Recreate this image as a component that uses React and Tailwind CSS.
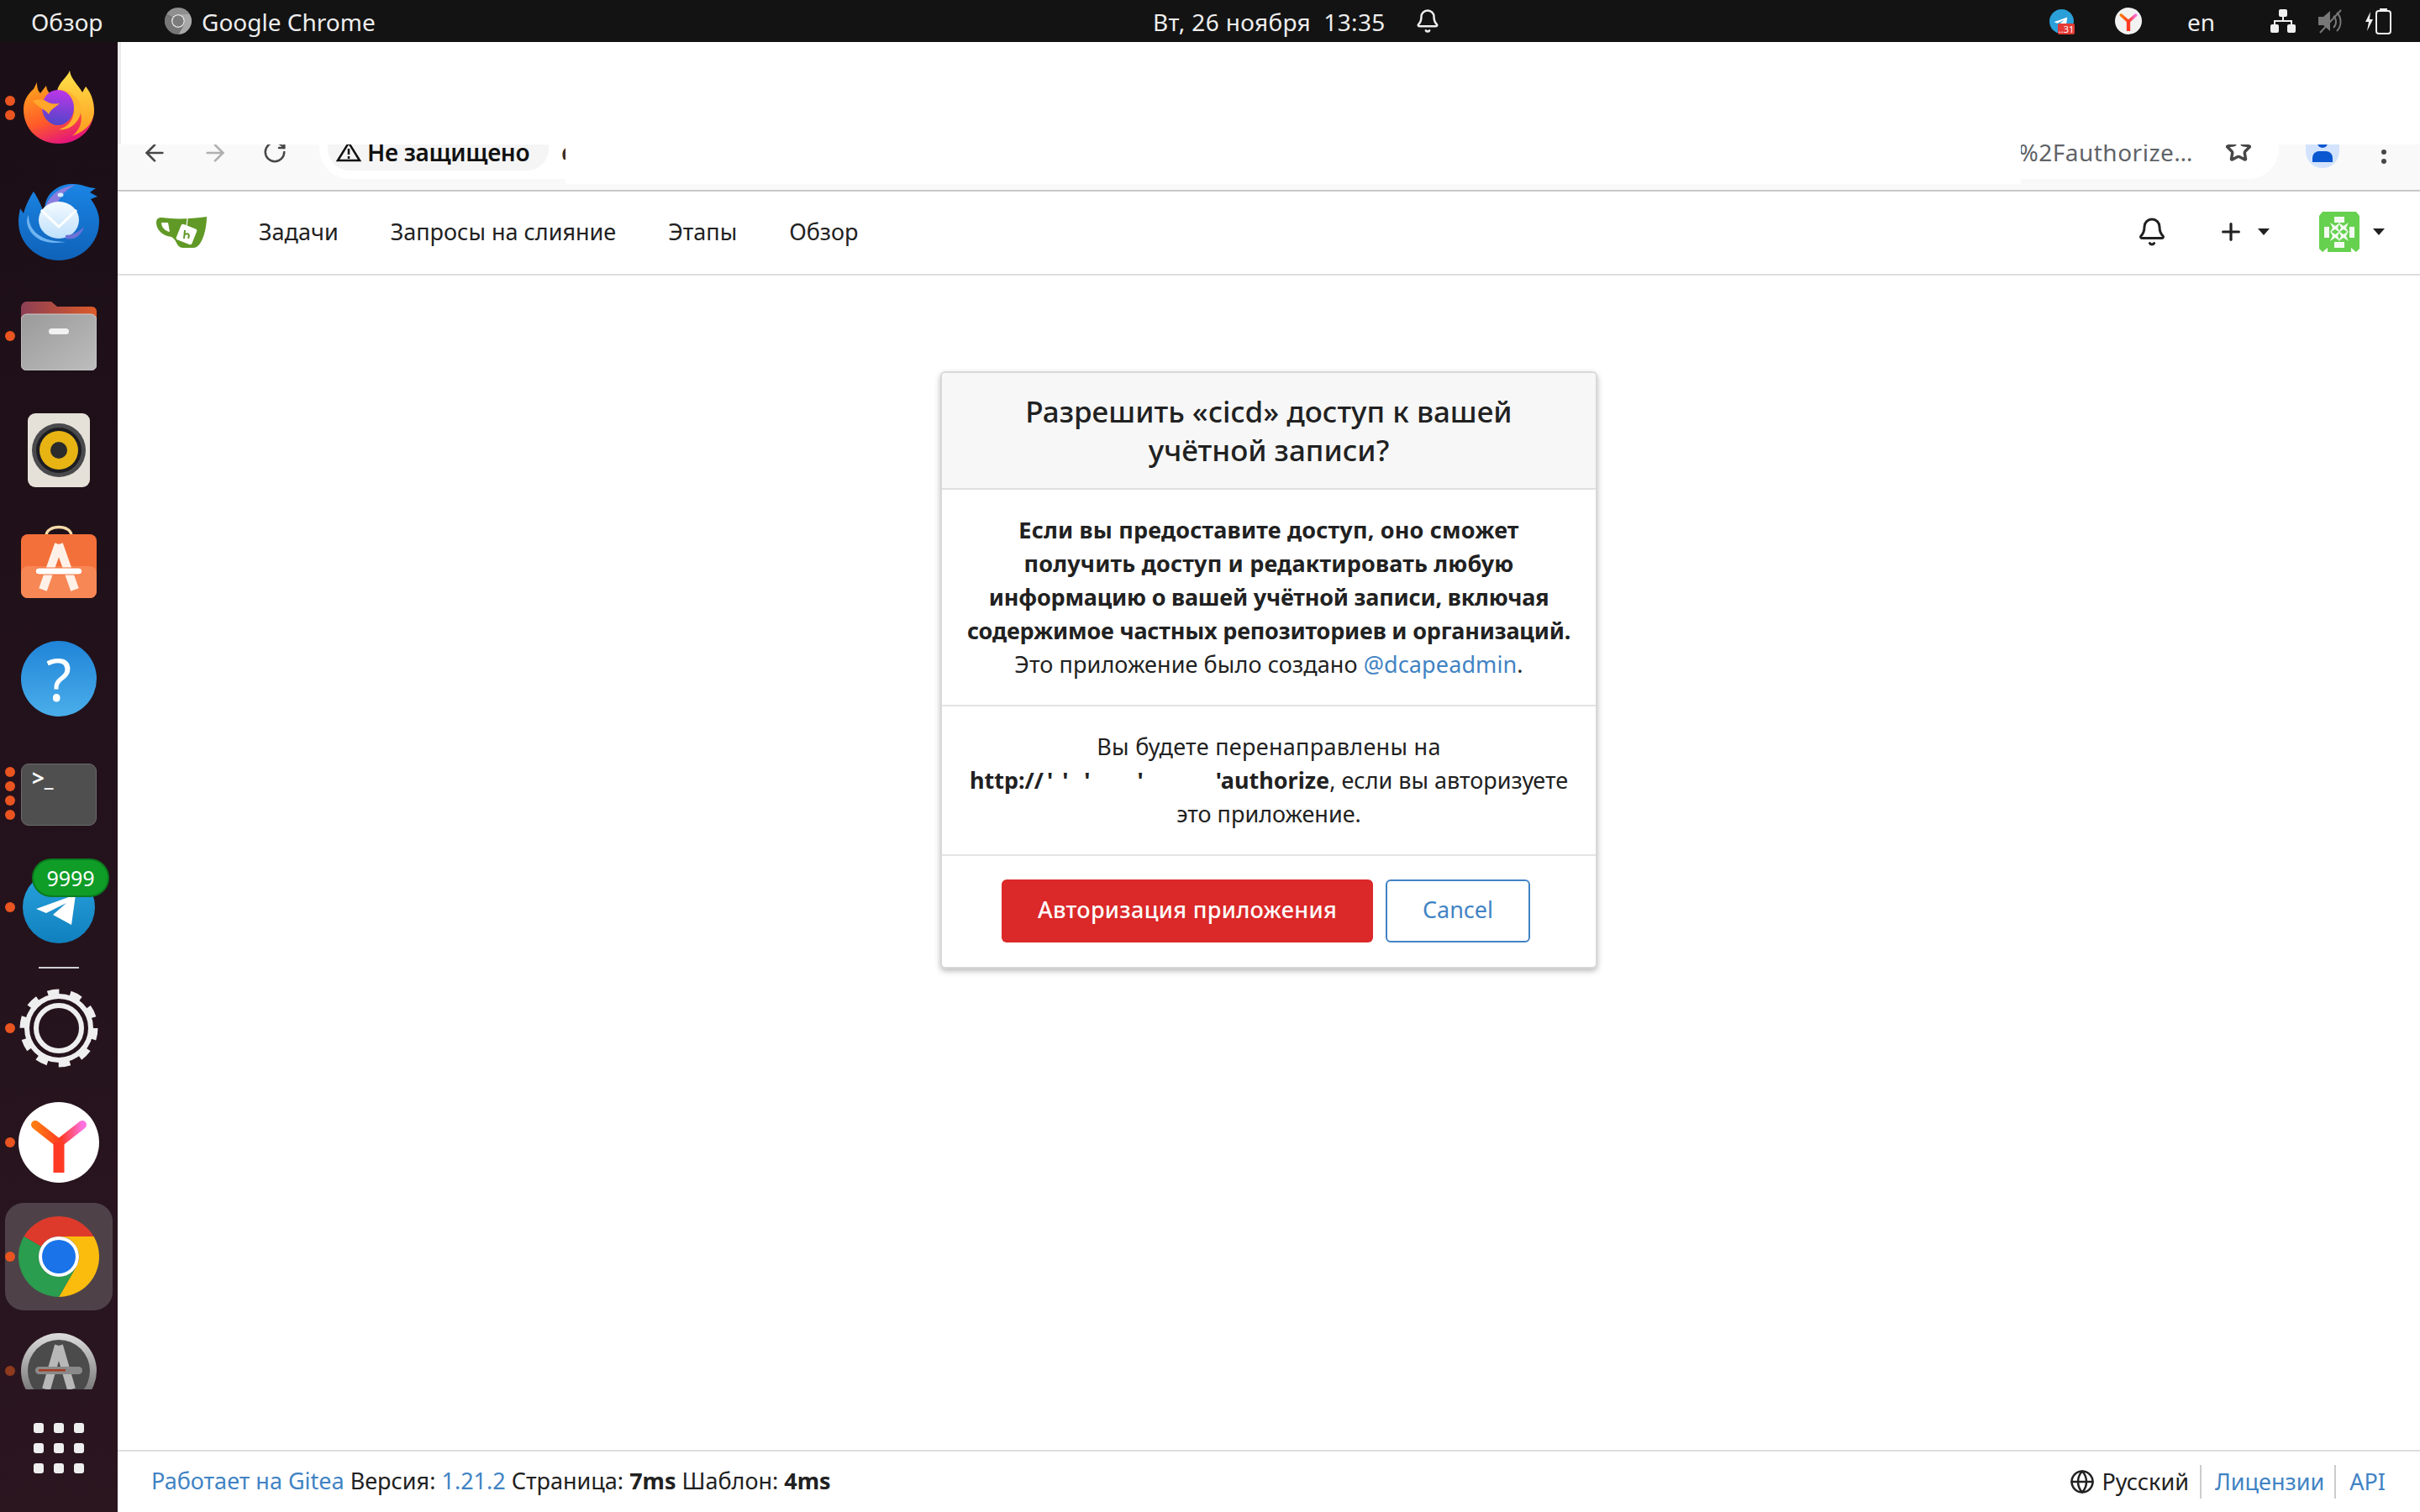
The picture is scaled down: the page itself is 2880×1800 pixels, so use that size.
import React from "react";
import { ArrowLeft, ArrowRight, Bell, Globe, Plus, RotateCw, Star } from "lucide-react";

const font = { fontFamily: '"Noto Sans", "Open Sans", sans-serif' };

const Firefox = () => (
  <svg width="84" height="88" viewBox="0 0 84 88">
    <defs>
      <linearGradient id="ffBody" x1="0.2" y1="0.1" x2="0.6" y2="1">
        <stop offset="0" stopColor="#ff9a1e" />
        <stop offset="0.55" stopColor="#ff5a2a" />
        <stop offset="1" stopColor="#e3127f" />
      </linearGradient>
      <linearGradient id="ffFlame" x1="0.5" y1="0" x2="0.5" y2="1">
        <stop offset="0" stopColor="#ffe14a" />
        <stop offset="1" stopColor="#ff9a1e" />
      </linearGradient>
      <linearGradient id="ffGlobe" x1="0.5" y1="0" x2="0.4" y2="1">
        <stop offset="0" stopColor="#bd36e8" />
        <stop offset="1" stopColor="#4f46c8" />
      </linearGradient>
    </defs>
    <path d="M0 46 C0 36 5 28 12 22 L16 14 C16 20 17 24 20 27 L27 18 C28 24 30 28 36 28 L70 30 L84 46 C84 70 66 87 42 87 C18 87 0 70 0 46 Z" fill="url(#ffBody)" />
    <path d="M55 0 C56 10 66 18 70 26 L74 19 C80 26 84 36 84 47 C84 62 74 72 58 78 C70 68 72 54 64 42 C60 34 50 30 40 24 C42 14 52 8 55 0 Z" fill="url(#ffFlame)" />
    <path d="M42 22 C58 24 70 36 68 50 C66 62 54 72 42 70 C56 66 60 56 60 46 C60 36 52 28 42 22 Z" fill="#ffb32c" />
    <ellipse cx="41" cy="44" rx="19" ry="21" fill="url(#ffGlobe)" />
    <path d="M11 36 C18 33 24 34 28 37 C32 40 38 40 43 39 C38 44 32 46 30 52 C26 46 17 44 11 36 Z" fill="#ffa62b" />
  </svg>
);

const Thunderbird = () => (
  <svg width="96" height="92" viewBox="0 0 96 92">
    <defs>
      <linearGradient id="tbBody" x1="0.5" y1="0" x2="0.5" y2="1">
        <stop offset="0" stopColor="#1a84e4" />
        <stop offset="1" stopColor="#0f62b8" />
      </linearGradient>
      <linearGradient id="tbEnv" x1="0.5" y1="0" x2="0.5" y2="1">
        <stop offset="0" stopColor="#f4faff" />
        <stop offset="1" stopColor="#bfe0fb" />
      </linearGradient>
    </defs>
    <path d="M32 24 C36 8 52 0 66 1 C74 1 84 6 92 6 L85 11 L94 16 L86 19 C94 30 96 38 96 46 C96 72 74 92 48 92 C22 92 0 72 0 46 C0 38 2 32 2 30 L6 36 C8 30 10 22 18 10 C22 16 26 24 30 34 Z" fill="url(#tbBody)" />
    <path d="M32 28 C38 12 52 4 68 2 C60 6 50 12 46 26 C40 26 36 28 32 34 Z" fill="#8a7de0" />
    <ellipse cx="50" cy="14" rx="3.5" ry="2.5" fill="#d6ecff" />
    <path d="M12 38 C12 56 26 70 56 70 C44 72 28 72 18 62 C10 54 8 44 12 38 Z" fill="#6fb4f1" />
    <ellipse cx="48" cy="44" rx="24" ry="22" fill="url(#tbEnv)" />
    <path d="M27 32 L48 52 L69 32" fill="none" stroke="#ffffff" strokeWidth="3" />
    <path d="M56 62 C66 62 74 56 78 52 C74 64 66 68 56 66 Z" fill="#6a72d8" />
  </svg>
);

const Files = () => (
  <svg width="90" height="82" viewBox="0 0 90 82">
    <defs>
      <linearGradient id="flTab" x1="0" y1="0" x2="1" y2="0">
        <stop offset="0" stopColor="#8c3f55" />
        <stop offset="1" stopColor="#dd5a28" />
      </linearGradient>
      <linearGradient id="flBody" x1="0" y1="0" x2="1" y2="1">
        <stop offset="0" stopColor="#9a9a9a" />
        <stop offset="1" stopColor="#bdbdbd" />
      </linearGradient>
    </defs>
    <path d="M0 8 C0 3 3 0 7 0 L36 0 L43 6 L84 6 C88 6 90 9 90 12 L90 30 L0 30 Z" fill="url(#flTab)" />
    <rect x="0" y="15" width="90" height="67" rx="7" fill="url(#flBody)" stroke="#cfcfcf" strokeWidth="1" />
    <rect x="33" y="32" width="24" height="7" rx="3.5" fill="#f2f2f2" />
  </svg>
);

const Rhythmbox = () => (
  <svg width="74" height="88" viewBox="0 0 74 88">
    <rect width="74" height="88" rx="9" fill="#e5e1d8" />
    <ellipse cx="37" cy="44" rx="32" ry="32" fill="#4a4a4c" />
    <ellipse cx="37" cy="44" rx="27" ry="27" fill="#1d1d22" />
    <ellipse cx="37" cy="44" rx="23" ry="23" fill="#e7b414" />
    <ellipse cx="37" cy="44" rx="10" ry="10" fill="#2b2b2b" />
  </svg>
);

const Software = () => (
  <svg width="90" height="88" viewBox="0 0 90 88">
    <path d="M30 14 C30 0 60 0 60 14" fill="none" stroke="#f5d9a8" strokeWidth="3.5" />
    <rect x="0" y="12" width="90" height="76" rx="8" fill="#f4703a" />
    <rect x="0" y="50" width="90" height="38" rx="8" fill="#f78755" />
    <path d="M45 24 L26 78 M45 24 L64 78" stroke="#fff1e8" strokeWidth="10" />
    <rect x="17" y="52" width="56" height="8" rx="4" fill="#ffffff" stroke="#f4703a" strokeWidth="1" />
  </svg>
);

const Plane = () => (
  <path d="M16 45 L63 28 L58 64 L36 52 L52 38 L28 50 Z" fill="#ffffff" />
);

const Telegram = () => (
  <svg width="86" height="86" viewBox="0 0 86 86">
    <defs>
      <linearGradient id="tgBody" x1="0.5" y1="0" x2="0.5" y2="1">
        <stop offset="0" stopColor="#2aa3e0" />
        <stop offset="1" stopColor="#0f80bd" />
      </linearGradient>
    </defs>
    <circle cx="43" cy="43" r="43" fill="url(#tgBody)" />
    <Plane />
  </svg>
);

const Gear = () => (
  <svg width="96" height="96" viewBox="0 0 96 96" fill="none">
    <circle cx="48" cy="48" r="41" stroke="#eeeeee" strokeWidth="11" strokeDasharray="13 12.75" />
    <circle cx="48" cy="48" r="38" stroke="#eeeeee" strokeWidth="6" />
    <circle cx="48" cy="48" r="27" stroke="#eeeeee" strokeWidth="6" />
  </svg>
);

const Yandex = () => (
  <svg width="96" height="96" viewBox="0 0 96 96">
    <defs>
      <linearGradient id="yaMark" x1="0" y1="0" x2="1" y2="0">
        <stop offset="0" stopColor="#ff7a10" />
        <stop offset="0.55" stopColor="#ff3a24" />
        <stop offset="1" stopColor="#ff70e0" />
      </linearGradient>
    </defs>
    <circle cx="48" cy="48" r="48" fill="#ffffff" />
    <path d="M20 27 L48 49 L76 27" fill="none" stroke="url(#yaMark)" strokeWidth="10" strokeLinecap="round" strokeLinejoin="round" />
    <path d="M48 48 L48 84" fill="none" stroke="#ff3a24" strokeWidth="13" />
  </svg>
);

const Chrome = ({ size = 96, red = "#de3a2c", yellow = "#fbbc0e", green = "#2a9d4e", blue = "#1a73e8", ring = "#ffffff" }) => (
  <svg width={size} height={size} viewBox="0 0 48 48">
    <path d="M24 0 A24 24 0 0 1 44.8 12 L24 12 A12 12 0 0 0 13.6 18 L3.2 12 A24 24 0 0 1 24 0 Z" fill={red} />
    <path d="M44.8 12 A24 24 0 0 1 24 48 L34.4 30 A12 12 0 0 0 24 12 Z" fill={yellow} />
    <path d="M24 48 A24 24 0 0 1 3.2 12 L13.6 18 A12 12 0 0 0 34.4 30 Z" fill={green} />
    <circle cx="24" cy="24" r="12" fill={ring} />
    <circle cx="24" cy="24" r="10" fill={blue} />
  </svg>
);

const Updater = () => (
  <svg className="mb-[24px]" width="90" height="68" viewBox="0 0 90 68">
    <defs>
      <linearGradient id="upRing" x1="0.5" y1="0" x2="0.5" y2="1">
        <stop offset="0" stopColor="#dddddd" />
        <stop offset="1" stopColor="#5a5a5a" />
      </linearGradient>
    </defs>
    <circle cx="45" cy="46" r="45" fill="url(#upRing)" />
    <circle cx="45" cy="46" r="37" fill="#4b4b4b" />
    <path d="M45 16 L30 68 M45 16 L60 68" stroke="#b8b8b8" strokeWidth="10" />
    <rect x="17" y="41" width="56" height="9" rx="4.5" fill="#8a8a8a" />
    <rect x="21" y="44" width="32" height="2.5" fill="#a23c22" />
  </svg>
);

const GiteaLogo = () => (
  <svg width="60" height="38" viewBox="0 0 60 38">
    <path d="M17 3 C28 4 46 3 60 1 C60 12 57 26 52 33 C50 36 47 38 44 38 L33 38 C28 38 26 36 24 32 C22 28 20 26 18 25 C8 24 0 17 0 8 C0 4 2 2 6 2 C10 2 13 3 17 3 Z" fill="#609926" />
    <path d="M6 8 C6 13 10 18 16 19 L14 8 Z" fill="#ffffff" />
    <path d="M37 3 L36 14" stroke="#ffffff" strokeWidth="1.2" />
    <rect x="26" y="12" width="20" height="20" rx="2.5" fill="#ffffff" transform="rotate(22 36 22)" />
    <path d="M34 17 L33 27 M34 22 C38 20 40 22 38 27" fill="none" stroke="#609926" strokeWidth="2" />
  </svg>
);

const UserAvatar = () => (
  <svg width="48" height="48" viewBox="0 0 48 48">
    <path d="M4 0 L44 0 L48 5 L48 44 L44 48 L38 43 L10 43 L4 48 L0 44 L0 5 Z" fill="#66d14f" />
    <path d="M10 42 L38 42 L38 48 L10 48 Z" fill="#66d14f" />
    <g fill="#ffffff" opacity="0.92">
      <rect x="18" y="6" width="12" height="7" />
      <rect x="18" y="36" width="12" height="7" />
      <rect x="6" y="18" width="6" height="13" />
      <rect x="36" y="18" width="6" height="13" />
      <path d="M13 13 L19 17 L25 13 L22 19 L25 25 L19 21 L13 25 L16 19 Z" />
      <path d="M23 13 L29 17 L35 13 L32 19 L35 25 L29 21 L23 25 L26 19 Z" />
      <path d="M13 23 L19 27 L25 23 L22 29 L25 35 L19 31 L13 35 L16 29 Z" />
      <path d="M23 23 L29 27 L35 23 L32 29 L35 35 L29 31 L23 35 L26 29 Z" />
    </g>
  </svg>
);

const Caret = ({ className = "" }) => (
  <span className={`inline-block w-0 h-0 border-x-[7px] border-x-transparent border-t-[8px] border-t-[#212121] ${className}`} />
);

const dockItems = [
  { key: "firefox", icon: <Firefox />, dots: 2 },
  { key: "thunderbird", icon: <Thunderbird /> },
  { key: "files", icon: <Files />, dots: 1 },
  { key: "rhythmbox", icon: <Rhythmbox /> },
  { key: "software", icon: <div className="mt-[-8px]"><Software /></div> },
  {
    key: "help",
    icon: (
      <div className="w-[90px] h-[90px] rounded-full bg-gradient-to-b from-[#1f84d8] to-[#4aaeea] flex items-center justify-center text-white text-[70px] leading-none">?</div>
    ),
  },
  {
    key: "terminal",
    icon: (
      <div className="mt-[4px] w-[90px] h-[74px] rounded-[9px] bg-[#4f4f4f] border border-[#6a6a6a] pl-[12px] pt-[2px] text-white text-[26px] font-bold leading-[28px]">{">_"}</div>
    ),
    dots: 4,
  },
  { key: "telegram", icon: <Telegram />, dots: 1, badge: "9999" },
];

const dockItems2 = [
  { key: "settings", icon: <Gear />, dots: 1 },
  { key: "yandex", icon: <Yandex />, dots: 1 },
  { key: "chrome", icon: <Chrome />, dots: 1, active: true },
  { key: "updater", icon: <Updater />, dots: 1, dim: true },
];

const DockItem = ({ item }) => (
  <div className="relative h-[136px] flex items-center justify-center">
    {item.active && <div className="absolute left-[6px] top-[4px] w-[128px] h-[128px] rounded-[22px] bg-[#4e4248]" />}
    <div className="relative">{item.icon}</div>
    {item.dots > 0 && (
      <div className="absolute left-[6px] top-0 h-full flex flex-col justify-center gap-[5px]">
        {Array.from({ length: item.dots }).map((_, i) => (
          <span key={i} className={`w-[12px] h-[12px] rounded-full ${item.dim ? "bg-[#8f3a1c]" : "bg-[#e95420]"}`} />
        ))}
      </div>
    )}
    {item.badge && (
      <div className="absolute left-[38px] top-[10px] w-[92px] h-[46px] rounded-full bg-[#0f9d27] border-[2px] border-[#0a7a1e] flex items-center justify-center text-white text-[25px] leading-none">{item.badge}</div>
    )}
  </div>
);

const Dock = () => (
  <aside className="w-[140px] shrink-0 pt-[10px] bg-gradient-to-b from-[#1b0e16] to-[#2b1620] flex flex-col">
    {dockItems.map((item) => <DockItem key={item.key} item={item} />)}
    <div className="h-[8px] flex items-center justify-center">
      <div className="w-[48px] h-[2px] bg-[#cfcfcf]" />
    </div>
    {dockItems2.map((item) => <DockItem key={item.key} item={item} />)}
    <div className="grid grid-cols-3 gap-x-[12px] gap-y-[12px] w-[60px] mx-auto mt-[-6px]">
      {Array.from({ length: 9 }).map((_, i) => (
        <span key={i} className="w-[12px] h-[12px] rounded-[3px] bg-[#eeeeee]" />
      ))}
    </div>
  </aside>
);

const TopBar = () => (
  <header className="h-[50px] shrink-0 bg-[#131313] text-[#eeeeee] flex items-center text-[28px] leading-none">
    <span className="ml-[37px] w-[159px] pt-[2px]">Обзор</span>
    <Chrome size={32} red="#8f8f8f" yellow="#a8a8a8" green="#777777" blue="#7c7c7c" ring="#eeeeee" />
    <span className="ml-[12px] w-[1132px] pt-[2px]">Google Chrome</span>
    <span className="w-[312px] pt-[2px] whitespace-pre tracking-[0.35px]">Вт, 26 ноября  13:35</span>
    <Bell size={30} strokeWidth={2} />
    <div className="ml-[725px] relative w-[29px] h-[29px] rounded-full bg-[#2a9fd8]">
      <svg width="29" height="29" viewBox="0 0 86 86"><Plane /></svg>
      <span className="absolute left-[10px] top-[17px] w-[20px] h-[13px] rounded-[2px] bg-[#e53935] text-white text-[11px] leading-[13px] text-center">..31</span>
    </div>
    <svg className="ml-[49px]" width="32" height="32" viewBox="0 0 96 96">
      <defs>
        <linearGradient id="yaMarkTop" x1="0" y1="0" x2="1" y2="0">
          <stop offset="0" stopColor="#ff7a10" />
          <stop offset="0.55" stopColor="#ff3a24" />
          <stop offset="1" stopColor="#ff70e0" />
        </linearGradient>
      </defs>
      <circle cx="48" cy="48" r="48" fill="#f2f2f2" />
      <path d="M22 27 L48 50 L74 27" fill="none" stroke="url(#yaMarkTop)" strokeWidth="11" strokeLinecap="round" strokeLinejoin="round" />
      <path d="M48 50 L48 84" fill="none" stroke="#ff3a24" strokeWidth="13" />
    </svg>
    <span className="ml-[54px] w-[99px] pt-[2px]">en</span>
    <svg width="30" height="28" viewBox="0 0 30 28" fill="#f0f0f0">
      <rect x="10" y="0" width="10" height="9" rx="2" />
      <rect x="0" y="18" width="10" height="10" rx="2" />
      <rect x="20" y="18" width="10" height="10" rx="2" />
      <path d="M14 9 H16 V13 H26 V18 H24 V15 H6 V18 H4 V13 H14 Z" />
    </svg>
    <svg className="ml-[27px]" width="28" height="30" viewBox="0 0 28 30" fill="none">
      <path d="M0 10 H6 L14 3 V27 L6 20 H0 Z" fill="#777777" />
      <path d="M18 9 C22 13 22 19 18 23 M22 5 C28 11 28 21 22 27" stroke="#777777" strokeWidth="2" />
      <path d="M2 29 L27 2" stroke="#777777" strokeWidth="2" />
    </svg>
    <svg className="ml-[27px]" width="32" height="32" viewBox="0 0 32 32" fill="none">
      <path d="M7 5 L1 17 H5 L3 28 L10 14 H6 Z" fill="#f0f0f0" />
      <rect x="14" y="4" width="17" height="27" rx="3" stroke="#f0f0f0" strokeWidth="2" />
      <rect x="18" y="1" width="9" height="3" fill="#f0f0f0" />
    </svg>
  </header>
);

const BrowserToolbar = () => (
  <div className="relative h-[56px] shrink-0 bg-[#f9f9f9] border-b-2 border-[#c8c8c8] overflow-hidden flex items-start">
    <ArrowLeft className="ml-[28px] mt-[-6px] text-[#474747]" size={32} strokeWidth={2} />
    <ArrowRight className="ml-[40px] mt-[-6px] text-[#b0b0b0]" size={32} strokeWidth={2} />
    <RotateCw className="ml-[40px] mt-[-6px] text-[#474747]" size={30} strokeWidth={2} />
    <div className="ml-[38px] w-[2332px] h-[41px] rounded-b-[36px] bg-white flex items-start pl-[10px] pr-[32px]">
      <div className="w-[263px] h-[31px] rounded-b-[26px] bg-[#f5f5f5] flex items-start pl-[10px] text-[#111111] text-[28px] font-semibold leading-[18px]">
        <svg className="mt-[-3px]" width="30" height="24" viewBox="0 0 30 24" fill="none">
          <path d="M15 1 L28 22 H2 Z" stroke="#111111" strokeWidth="2.5" />
          <path d="M15 8 V15 M15 17 V20" stroke="#111111" strokeWidth="2.5" />
        </svg>
        <span className="ml-[7px] whitespace-nowrap tracking-[-0.3px]">Не защищено</span>
      </div>
      <span className="ml-[15px] w-[5px] overflow-hidden text-[#333333] text-[28px] font-semibold leading-[18px]">g</span>
      <span className="ml-auto mr-[38px] text-[#5f6368] text-[28px] leading-[18px] whitespace-nowrap tracking-[0.5px]">n%2Fauthorize…</span>
      <Star className="mt-[-10px] text-[#474747]" size={32} strokeWidth={2.6} />
    </div>
    <div className="ml-[32px] relative w-[40px] h-[28px] rounded-b-full bg-[#d3e3fd] overflow-hidden">
      <span className="absolute left-[14px] top-[-8px] w-[12px] h-[12px] rounded-full bg-[#0b57d0]" />
      <span className="absolute left-[8px] top-[8px] w-[24px] h-[13px] rounded-t-[8px] bg-[#0b57d0]" />
    </div>
    <div className="ml-[50px] mt-[6px] flex flex-col gap-[5px]">
      <span className="w-[6px] h-[6px] rounded-full bg-[#474747]" />
      <span className="w-[6px] h-[6px] rounded-full bg-[#474747]" />
    </div>
    {/* redacted part of the address */}
    <div className="absolute left-[533px] top-0 w-[1732px] h-[47px] bg-white" />
  </div>
);

const NavLink = ({ children, className = "" }) => (
  <a className={`whitespace-nowrap ${className}`}>{children}</a>
);

const GiteaNav = () => (
  <nav className="h-[100px] shrink-0 border-b-2 border-[#dedede] flex items-center text-[27px] leading-[36px] pb-[2px] text-[#212121]">
    <span className="ml-[46px]"><GiteaLogo /></span>
    <NavLink className="ml-[62px]">Задачи</NavLink>
    <NavLink className="ml-[62px]">Запросы на слияние</NavLink>
    <NavLink className="ml-[62px]">Этапы</NavLink>
    <NavLink className="ml-[62px]">Обзор</NavLink>
    <Bell className="ml-auto" size={36} strokeWidth={2} />
    <Plus className="ml-[60px]" size={32} strokeWidth={2.4} />
    <Caret className="ml-[16px]" />
    <span className="ml-[59px]"><UserAvatar /></span>
    <Caret className="ml-[16px] mr-[42px]" />
  </nav>
);

const AuthCard = () => (
  <section className="w-[782px] mx-auto mt-[114px] bg-white border-[2px] border-[#d8d8d8] rounded-[6px] shadow-[0_3px_7px_rgba(0,0,0,0.28)] text-[#212121] text-center">
    <h3 className="h-[139px] bg-[#f7f7f7] border-b-2 border-[#e0e0e0] rounded-t-[5px] pt-[23px] px-[40px] text-[35px] leading-[46px] font-medium">
      Разрешить «cicd» доступ к вашей учётной записи?
    </h3>
    <div className="h-[258px] border-b-2 border-[#e4e4e4] pt-[28px] text-[27px] leading-[40px]">
      <p className="font-bold tracking-[-0.2px]">
        <span className="tracking-[0.17px]">Если вы предоставите доступ, оно сможет</span><br />
        <span className="tracking-[0.17px]">получить доступ и редактировать любую</span><br />
        информацию о вашей учётной записи, включая<br />
        содержимое частных репозиториев и организаций.
      </p>
      <p className="tracking-[0.1px]">Это приложение было создано <a className="text-[#4183c4]">@dcapeadmin</a>.</p>
    </div>
    <div className="h-[178px] border-b-2 border-[#e4e4e4] pt-[28px] text-[27px] leading-[40px]">
      <p className="tracking-[0.3px]">Вы будете перенаправлены на</p>
      <p className="whitespace-nowrap">
        <b>http:/</b>
        <span className="inline-flex w-[222px] font-bold text-left">
          <span>/</span>
          <span className="ml-[4px]">'</span>
          <span className="ml-[11px]">'</span>
          <span className="ml-[19px]">'</span>
          <span className="ml-[56px]">'</span>
          <span className="ml-[86px]">'</span>
        </span>
        <b>authorize</b>, если вы авторизуете
      </p>
      <p>это приложение.</p>
    </div>
    <div className="h-[132px] flex items-start justify-center gap-[15px] pt-[28px] pr-[7px] text-[27px]">
      <button className="w-[442px] h-[75px] rounded-[6px] bg-[#db2828] text-white font-medium pb-[2px] tracking-[0.3px]">Авторизация приложения</button>
      <button className="w-[172px] h-[75px] rounded-[6px] border-2 border-[#4183c4] text-[#4183c4] bg-white pb-[2px]">Cancel</button>
    </div>
  </section>
);

const FooterBar = () => (
  <footer className="mt-auto h-[74px] shrink-0 border-t-2 border-[#dedede] flex items-center pl-[40px] pr-[41px] text-[27px] text-[#212121]">
    <span className="whitespace-nowrap pb-[2px]">
      <a className="text-[#4183c4]">Работает на Gitea</a> Версия: <a className="text-[#4183c4]">1.21.2</a> Страница: <b>7ms</b> Шаблон: <b>4ms</b>
    </span>
    <div className="ml-auto flex items-center">
      <Globe size={30} strokeWidth={2} />
      <span className="ml-[8px] pr-[13px] border-r-2 border-[#cccccc] leading-[40px]">Русский</span>
      <a className="pl-[16px] pr-[12px] border-r-2 border-[#cccccc] leading-[40px] text-[#4183c4]">Лицензии</a>
      <a className="pl-[16px] leading-[40px] text-[#4183c4]">API</a>
    </div>
  </footer>
);

export default function App() {
  return (
    <div className="w-[2880px] h-[1800px] overflow-hidden flex flex-col bg-white" style={font}>
      <TopBar />
      <div className="flex flex-1 min-h-0">
        <Dock />
        <main className="flex-1 min-w-0 flex flex-col bg-white">
          <div className="h-[122px] shrink-0 bg-white border-l-[4px] border-[#ececec]" />
          <BrowserToolbar />
          <GiteaNav />
          <AuthCard />
          <FooterBar />
        </main>
      </div>
    </div>
  );
}
